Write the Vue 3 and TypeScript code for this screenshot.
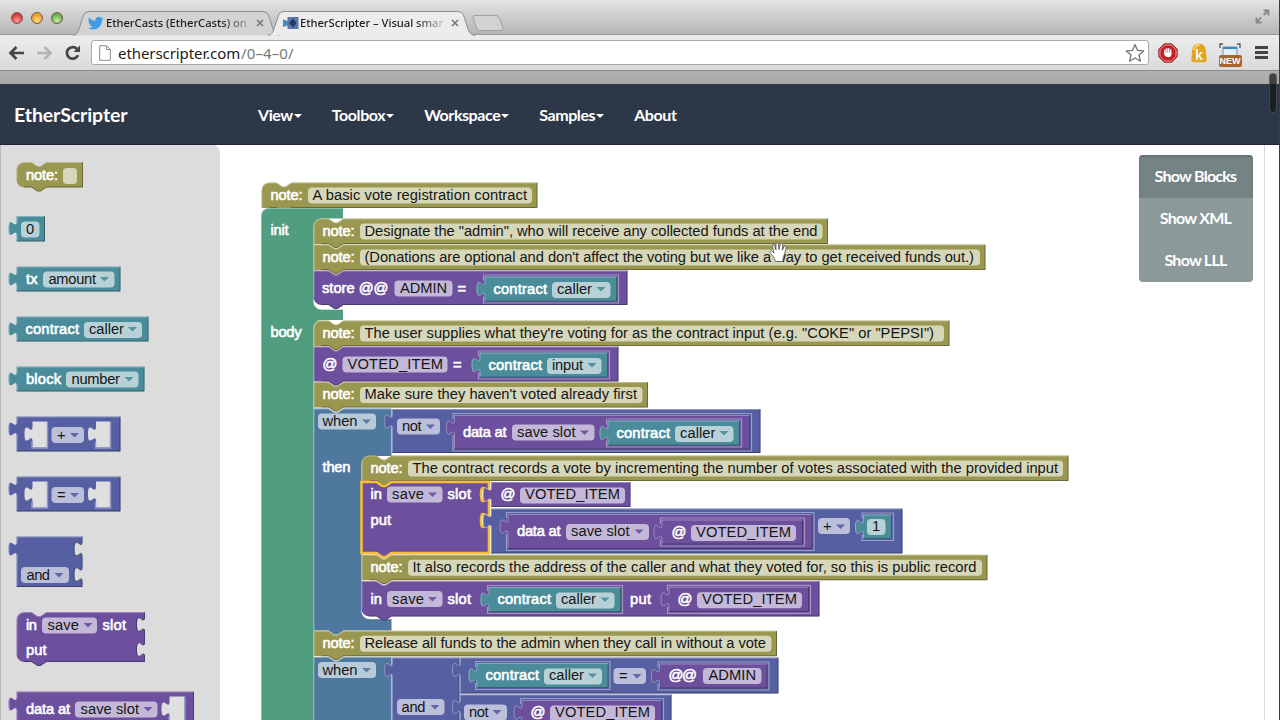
<script setup lang="ts">
type Shape =
  | { t: 'path'; d: string; fill: string; light: string; dark: string; sel?: boolean }
  | { t: 'rim'; d: string }
  | { t: 'hole'; d: string; rim: string }
  | { t: 'label'; s: string; x: number; w: number; y: number }
  | { t: 'field'; x: number; y: number; w: number; h: number }
  | { t: 'value'; s: string; x: number; w: number; y: number }
  | { t: 'arrow'; x: number; y: number; fill: string }

const C = {
  olive: '#9a9850',
  green: '#519d80',
  steel: '#4f789f',
  purple: '#6c4f9d',
  indigo: '#555fa2',
  teal: '#4b8c9b',
}
const LEFT_TAB = 'c0,-10 -8,8 -8,-7.5 s8,2.5 8,-7.5'
const RIGHT_TAB = 'c0,10 -8,-8 -8,7.5 s8,-2.5 8,7.5'

class Canvas {
  items: Shape[] = []

  raw(d: string, light: string, fill: string, dark = '', sel = false) {
    this.items.push({ t: 'path', d, fill, light, dark, sel })
    return this
  }

  // Statement block; `o.first` / `o.last` round the corners of a stack.
  stmt(x: number, y: number, r: number, b: number, fill: string,
       o: { first?: boolean; last?: boolean; tabs?: number[]; sel?: boolean } = {}) {
    const start = o.first ? `M${x},${y + 8} a8,8 0 0 1 8,-8` : `M${x},${y}`
    const top = `H${x + 15} l6,4 h3 l6,-4 H${r}`
    const tabs = (o.tabs ?? []).map((t) => `V${t} ${RIGHT_TAB}`).join(' ')
    const bottom = `V${b} H${x + 30} l-6,4 h-3 l-6,-4`
    const end = o.last ? `H${x + 8} a8,8 0 0 1 -8,-8 Z` : `H${x} Z`
    const left = o.last ? b - 8 : b
    return this.raw(
      `${start} ${top} ${tabs} ${bottom} ${end}`,
      `M${x + 0.5},${left} V${o.first ? y + 8 : y + 0.5} ${o.first ? 'a7.5,7.5 0 0 1 7.5,-7.5' : ''} H${x + 15} l6,4 h3 l6,-4 H${r}`,
      fill,
      `M${r - 0.5},${y} ${tabs} V${b - 0.5} H${x + 30} l-6,4 h-3 l-6,-4 H${x + 8}`,
      o.sel,
    )
  }

  // Value block with a plug on its left side.
  val(x: number, y: number, r: number, b: number, fill: string, inset = false, tabs: number[] = []) {
    const sockets = tabs.map((t) => `V${t} ${RIGHT_TAB}`).join(' ')
    if (inset) {
      this.items.push({ t: 'rim', d: `M${x - 1},${y + 20} V${b + 1.5} H${r + 1.5} V${y - 1.5} H${x - 1} V${y + 4}` })
    }
    return this.raw(
      `M${x},${y} H${r} ${sockets} V${b} H${x} V${y + 20} ${LEFT_TAB} Z`,
      `M${x + 0.5},${b} V${y + 20} ${LEFT_TAB} V${y + 0.5} H${r}`,
      fill,
      `M${r - 0.5},${y} ${sockets} V${b - 0.5} H${x}`,
    )
  }

  hole(x: number, y: number, r: number, b: number) {
    this.items.push({
      t: 'hole',
      d: `M${x},${y} H${r} V${b} H${x} V${y + 20} ${LEFT_TAB} Z`,
      rim: `M${r + 0.5},${y} V${b + 0.5} H${x - 0.5} V${y + 20}`,
    })
    return this
  }

  label(s: string, x: number, end: number, y: number) {
    this.items.push({ t: 'label', s, x, w: end - x, y })
    return this
  }

  field(x: number, r: number, y: number, s = '', tx = 0, te = 0, base = 0, arrow = 0, tone = '') {
    this.items.push({ t: 'field', x, y, w: r - x, h: 16 })
    if (s) this.items.push({ t: 'value', s, x: tx, w: te - tx, y: base })
    if (arrow) this.items.push({ t: 'arrow', x: arrow, y: base - 7, fill: tone })
    return this
  }

  note(x: number, y: number, r: number, s: string, te: number, first = false) {
    return this.stmt(x, y, r, y + 25.5, C.olive, { first })
      .label('note:', x + 9, x + 41, y + 17)
      .field(x + 46.5, r - 5.5, y + 5, s, x + 51, te, y + 17.4)
  }

  contract(x: number, y: number, r: number, s: string, te: number, inset = true) {
    return this.val(x, y, r, y + 25, C.teal, inset)
      .label('contract', x + 9, x + 62.5, y + 17.4)
      .field(x + 67.5, r - 6.5, y + 5.5, s, x + 72.5, te, y + 17.4, r - 16, C.teal)
  }

  voted(x: number, y: number, r: number, inset = true) {
    const f = r - (inset ? 112 : 110.5)
    return this.val(x, y, r, y + 25, C.purple, inset)
      .label('@', f - 19.5, f - 6, y + 17)
      .field(f, f + 105, y + 5.5, 'VOTED_ITEM', f + 5, f + 100, y + 17.4)
  }
}

const toolbox = new Canvas()
  .stmt(16.5, 162, 83, 187.5, C.olive, { first: true, last: true })
  .label('note:', 26, 58, 180)
  .field(63, 77, 168)
  .val(16.5, 216, 45, 241.5, C.teal)
  .field(21, 39.5, 221.5, '0', 26, 34, 234)
  .val(16.5, 266.5, 120.5, 291.5, C.teal)
  .label('tx', 26, 37.5, 284)
  .field(43, 114.5, 271.5, 'amount', 48.5, 96, 284, 104.5, C.teal)
  .contract(16.5, 316.5, 148.5, 'caller', 124, false)
  .val(16.5, 366.5, 144.5, 391.5, C.teal)
  .label('block', 26, 61, 384)
  .field(66, 138.5, 371.5, 'number', 71.5, 120, 384, 129, C.teal)
  .val(16.5, 416.5, 120.5, 451.5, C.indigo)
  .hole(32.5, 421.5, 47, 447.5)
  .field(51.5, 84, 427, '+', 57, 65, 440, 74.5, C.indigo)
  .hole(96, 421.5, 110, 447.5)
  .val(16.5, 476.5, 120.5, 511.5, C.indigo)
  .hole(32.5, 481.5, 47, 507.5)
  .field(51.5, 84, 487, '=', 57, 65, 500, 74.5, C.indigo)
  .hole(96, 481.5, 110, 507.5)
  .val(16.5, 536.5, 82.5, 587, C.indigo, false, [541.5, 567])
  .field(21, 69, 567, 'and', 26.5, 50, 580, 59, C.indigo)
  .stmt(16.5, 612, 145, 662, C.purple, { first: true, last: true, tabs: [617, 642] })
  .label('in', 26, 37, 630)
  .field(42, 97, 617.5, 'save', 47.5, 79, 630, 88, C.purple)
  .label('slot', 102.5, 126, 630)
  .label('put', 26, 46.5, 655)
  .val(16.5, 691.5, 194, 740, C.purple)
  .label('data at', 26, 70, 714)
  .field(75, 157.5, 701.5, 'save slot', 80.5, 139, 714, 148, C.purple)
  .hole(169.5, 696.5, 184.5, 724)
  .items

const program = new Canvas()
  .note(261.5, 182.5, 537.5, 'A basic vote registration contract', 527, true)
  .raw(
    'M261,216 a8,8 0 0 1 8,-8 H343 V218.5 H321.5 a8,8 0 0 0 -8,8 V301.5 a8,8 0 0 0 8,8 H343 V320 H321.5 a8,8 0 0 0 -8,8 V730 H261 Z',
    'M261.5,730 V216 a7.5,7.5 0 0 1 7.5,-7.5 H343 M313.5,301.5 a8,8 0 0 0 8,8 H343',
    C.green,
  )
  .label('init', 270.5, 288.5, 235)
  .label('body', 270.5, 301.5, 337)
  .note(313.5, 218.5, 828, 'Designate the "admin", who will receive any collected funds at the end', 817.5, true)
  .note(313.5, 244.5, 985.5, "(Donations are optional and don't affect the voting but we like a way to get received funds out.)", 974)
  .stmt(313.5, 270.5, 627.5, 305, C.purple, { last: true })
  .label('store @@', 322, 388.5, 293)
  .field(394.5, 452.5, 280.5, 'ADMIN', 400, 447, 293)
  .label('=', 457.5, 466.5, 294)
  .contract(484.5, 276.5, 617, 'caller', 592)
  .note(313.5, 320.5, 949.5, 'The user supplies what they\'re voting for as the contract input (e.g. "COKE" or "PEPSI")', 934, true)
  .stmt(313.5, 346.5, 618.5, 381.5, C.purple)
  .label('@', 322.5, 336, 369)
  .field(342.5, 447.5, 356.5, 'VOTED_ITEM', 347.5, 443, 369)
  .label('=', 453, 461.5, 370)
  .contract(479.5, 352.5, 608, 'input', 583)
  .note(313.5, 382, 648, "Make sure they haven't voted already first", 637)
  .raw(
    'M313.5,408.5 h15 l6,4 h3 l6,-4 H391.5 V456 H369.5 a8,8 0 0 0 -8,8 V611 a8,8 0 0 0 8,8 H391.5 V630.5 H343.5 l-6,4 h-3 l-6,-4 H313.5 Z',
    'M314,630 V409 H328.5 l6,4 h3 l6,-4 H391.5 M361.5,611 a8,8 0 0 0 8,8 H391',
    C.steel,
  )
  .field(318, 376, 413.5, 'when', 322.5, 357.5, 426.4, 366.5, C.steel)
  .label('then', 322.5, 350.5, 472.4)
  .val(392, 409, 760.5, 453, C.indigo)
  .field(397, 440, 418.5, 'not', 402, 421.5, 431.4, 430.5, C.indigo)
  .val(454, 415, 750, 449.5, C.purple, true)
  .label('data at', 463, 506.5, 437.4)
  .field(512, 594.5, 424.5, 'save slot', 517, 575.5, 437.4, 584.5, C.purple)
  .contract(607.5, 420.5, 740, 'caller', 715.5)
  .note(361.5, 455.5, 1068.5, 'The contract records a vote by incrementing the number of votes associated with the provided input', 1058, true)
  .stmt(361.5, 482, 489, 553, C.purple, { tabs: [487, 513], sel: true })
  .label('in', 370.5, 382, 499.4)
  .field(387, 442.5, 486.5, 'save', 392, 424, 499.4, 432.5, C.purple)
  .label('slot', 447.5, 471, 499.4)
  .label('put', 370.5, 391, 525.4)
  .voted(491, 482, 630.5, false)
  .val(491, 508.5, 902.5, 553.5, C.indigo)
  .val(507.5, 514, 812.5, 549, C.purple, true)
  .label('data at', 517, 560.5, 536.4)
  .field(566, 649, 524, 'save slot', 571, 629.5, 536.4, 639, C.purple)
  .voted(661.5, 519.5, 803)
  .field(818, 850, 518, '+', 823, 831.5, 531.4, 840.5, C.indigo)
  .val(863, 514.5, 892, 539, C.teal, true)
  .field(867, 885.5, 519, '1', 872, 880, 531.4)
  .note(361.5, 554.7, 987.5, 'It also records the address of the caller and what they voted for, so this is public record', 976.5)
  .stmt(361.5, 581, 819.5, 616.5, C.purple, { last: true })
  .label('in', 370.5, 382, 604)
  .field(387, 442.5, 591, 'save', 392, 424, 604, 432.5, C.purple)
  .label('slot', 447.5, 471, 604)
  .contract(488.5, 587, 621, 'caller', 596)
  .label('put', 630, 651, 604)
  .voted(668.5, 586.8, 809)
  .note(313.5, 630.8, 777, 'Release all funds to the admin when they call in without a vote', 766)
  .raw(
    'M313.5,657 h15 l6,4 h3 l6,-4 H391.5 V730 H313.5 Z',
    'M314,730 V657.5 H328.5 l6,4 h3 l6,-4 H391.5',
    C.steel,
  )
  .field(318, 376, 662, 'when', 322.5, 357.5, 675, 366.5, C.steel)
  .val(392, 657.5, 459.5, 740, C.indigo)
  .field(397, 444.5, 699, 'and', 401.5, 425.5, 712, 435, C.indigo)
  .val(460, 657.5, 778.5, 693.5, C.indigo)
  .contract(476.5, 663, 608.5, 'caller', 584)
  .field(613.5, 646, 668, '=', 619, 627.5, 681, 637, C.indigo)
  .val(659, 663.5, 767.5, 688.5, C.purple, true)
  .label('@@', 668.5, 697, 680)
  .field(703, 761.5, 668, 'ADMIN', 708.5, 756, 680.4)
  .val(460, 694.5, 671.5, 740, C.indigo)
  .field(464, 507, 704.5, 'not', 469, 488.5, 717, 497, C.indigo)
  .voted(521.5, 700, 662)
  .items

const layers = [
  { name: 'toolbox', tag: 'aside', box: '0 145 220 575', w: 220, items: toolbox },
  { name: 'program', tag: 'main', box: '220 145 1044 575', w: 1044, items: program },
]
const tabs = [
  { title: 'EtherCasts (EtherCasts) on', icon: 'bird', active: false },
  { title: 'EtherScripter – Visual smar', icon: 'puzzle', active: true },
]
const menus = [
  { name: 'View', caret: true },
  { name: 'Toolbox', caret: true },
  { name: 'Workspace', caret: true },
  { name: 'Samples', caret: true },
  { name: 'About', caret: false },
]
const views = ['Show Blocks', 'Show XML', 'Show LLL']
</script>

<template>
  <div class="window">
    <header class="tabstrip">
      <div class="lights"><i class="red"></i><i class="amber"></i><i class="lime"></i></div>
      <div v-for="t in tabs" :key="t.title" class="tab" :class="{ active: t.active }">
        <svg class="tabshape" width="208" height="26" viewBox="0 0 208 26">
          <path d="M0,25.5 C4,24.5 5,22 6,19 L10.5,5 Q12,1.5 16,1.5 H190 Q194,1.5 195.500,5 L200,19 C201.500,23 203,25 207,25.500" />
        </svg>
        <svg v-if="t.icon === 'bird'" class="fav" width="16" height="14" viewBox="0 0 16 14">
          <path fill="#3f9be6" d="M15.500 2.400c-.6.300-1.200.5-1.900.5.700-.4 1.100-1 1.400-1.800-.6.400-1.300.7-2 .8A3.200 3.200 0 0 0 7.500 4.800C4.900 4.700 2.500 3.400.9 1.400c-.9 1.500-.4 3.300 1 4.300-.5 0-1-.2-1.400-.4 0 1.600 1.100 2.900 2.500 3.200-.5.100-1 .1-1.400 0 .4 1.300 1.600 2.200 3 2.200C3.200 11.800 1.600 12.300 0 12.100c5 3.200 13.900 1 13.900-7.800.6-.5 1.200-1.100 1.600-1.900z" />
        </svg>
        <svg v-else class="fav" width="16" height="14" viewBox="0 0 16 14">
          <path fill="#5a76ab" d="M4.500 1H15.500V13H4.500V9.500L0 11V3.500L4.500 5Z" /><path fill="#25385f" d="M10 2.500 13.500 7 10 11.500 6 7Z" /><path fill="#3e93c4" d="M0 4 3.500 5.500V9L0 10.500Z" />
        </svg>
        <span class="title">{{ t.title }}</span>
        <svg class="close" width="8" height="8" viewBox="0 0 8 8"><path d="M1 1 7 7M7 1 1 7" stroke="#777" stroke-width="1.600" /></svg>
      </div>
      <svg class="newtab" width="34" height="18" viewBox="0 0 34 18">
        <path d="M3.500 1.500H25Q27.500 1.500 28.500 4L32 14Q32.500 16.500 30 16.500H9Q6.500 16.500 5.500 14L2 4Q1.500 1.500 3.500 1.500Z" fill="#d2d2d2" stroke="#a0a0a0" />
      </svg>
      <svg class="expand" width="15" height="15" viewBox="0 0 15 15">
        <path d="M8.500 1.500H13.500V6.500M13.500 1.500 8.500 6M1.500 8.500V13.500H6.500M1.500 13.500 6 8.500" fill="none" stroke="#858585" stroke-width="1.800" />
      </svg>
    </header>

    <div class="toolbar">
      <svg width="82" height="20" viewBox="0 0 82 20" class="navicons">
        <path d="M16 10H2.500M8.500 4 2.500 10 8.500 16" fill="none" stroke="#444" stroke-width="2.700" />
        <path d="M29 10H42.500M36.500 4 42.500 10 36.500 16" fill="none" stroke="#b5b5b5" stroke-width="2.700" />
        <path d="M69 6A5.800 5.800 0 1 0 70 12.200" fill="none" stroke="#444" stroke-width="2.700" /><path d="M72 2.500V9H65.500Z" fill="#444" />
      </svg>
      <div class="omnibox">
        <svg width="12" height="16" viewBox="0 0 12 16"><path d="M.7.7H7.500L11.300 4.500V15.300H.7ZM7.500.7V4.500H11.300" fill="#fff" stroke="#8a8a8a" /></svg>
        <span class="url">etherscripter.com<em>/0–4–0/</em></span>
        <svg class="star" width="20" height="20" viewBox="0 0 20 20"><path d="M10 1.500 12.500 7.300 18.700 7.900 14 12 15.400 18.200 10 15 4.600 18.200 6 12 1.300 7.900 7.500 7.300Z" fill="#fff" stroke="#777" stroke-width="1.300" stroke-linejoin="round" /></svg>
      </div>
      <div class="exts">
        <svg width="20" height="20" viewBox="0 0 20 20">
          <path d="M6.200.8H13.800L19.200 6.200V13.800L13.800 19.200H6.200L.8 13.800V6.200Z" fill="#c71f26" stroke="#8e3a3d" /><path d="M6.700 2H13.300L18 6.700V13.300L13.300 18H6.700L2 13.300V6.700Z" fill="none" stroke="#eba7a7" stroke-width=".9" />
          <path d="M7 10.500V7M8.900 9.500V5.700M10.800 9.500V5.700M12.700 10.500V7" stroke="#fff" stroke-width="1.400" stroke-linecap="round" /><path d="M6.300 9.500H13.400V12Q12.800 14.300 10.500 14.300 7.800 14.300 6.300 12Z" fill="#fff" />
        </svg>
        <svg width="18" height="20" viewBox="0 0 18 20"><path d="M2 9C2 3 5 .7 9 .7S16 3 16 9L16.700 17Q16.700 19.300 14.500 19.300H3.500Q1.300 19.300 1.300 17Z" fill="#e5a41f" /><path d="M4 7Q5 2 9.500 2" stroke="#f7cf6c" stroke-width="2" fill="none" /><text x="5" y="17" class="kay">k</text></svg>
        <div class="newicon"><svg width="22" height="14" viewBox="0 0 22 14"><path d="M1 5V1H4M18 1H21V5" fill="none" stroke="#555" stroke-width="1.300" /><path d="M4 4H18V14H4Z" fill="#e4f0f8" stroke="#6796b7" /><path d="M4 5H18" stroke="#3e87bb" stroke-width="2" /></svg><b>NEW</b></div>
        <div class="burger"><i></i><i></i><i></i></div>
      </div>
    </div>
    <div class="shade"></div>

    <nav class="navbar">
      <div class="brand">EtherScripter</div>
      <div v-for="m in menus" :key="m.name" class="menu">{{ m.name }}<i v-if="m.caret"></i></div>
    </nav>

    <div class="page">
      <component :is="layer.tag" v-for="layer in layers" :key="layer.name" :class="layer.name">
        <svg class="blocks" :width="layer.w" height="575" :viewBox="layer.box">
          <template v-for="(s, i) in layer.items" :key="i">
            <g v-if="s.t === 'path'">
              <path :d="s.d" :fill="s.fill" />
              <path v-if="!s.sel" :d="s.light" class="lit" />
              <path v-if="s.dark && !s.sel" :d="s.dark" class="dim" />
              <path v-if="s.sel" :d="s.d" class="chosen" />
            </g>
            <path v-else-if="s.t === 'rim'" :d="s.d" class="rim" />
            <g v-else-if="s.t === 'hole'">
              <path :d="s.d" fill="#dfdfdf" /><path :d="s.rim" class="holerim" />
            </g>
            <text v-else-if="s.t === 'label'" class="label" :x="s.x" :y="s.y" :textLength="s.w">{{ s.s }}</text>
            <rect v-else-if="s.t === 'field'" class="field" :x="s.x" :y="s.y" :width="s.w" :height="s.h" rx="4" />
            <text v-else-if="s.t === 'value'" class="value" :x="s.x" :y="s.y" :textLength="s.w">{{ s.s }}</text>
            <path v-else-if="s.t === 'arrow'" class="arrow" :d="`M${s.x - 4.5},${s.y} h9 l-4.500,4.500 z`" :fill="s.fill" />
          </template>
        </svg>
      </component>
      <div class="views"><div v-for="(v, i) in views" :key="v" :class="{ on: i === 0 }">{{ v }}</div></div>
      <svg class="hand" width="20" height="22" viewBox="0 0 20 22">
        <path d="M6.500 20.500 5 16.500 1 11.500Q.7 9.500 2.500 9.800L5 12 3.500 5Q3.500 3.200 5.200 3.500L7 9 7 2.500Q8 .8 9.300 2.500L10 8.500 11.500 2.500Q13 1.200 13.700 3L13.300 9.200 15.500 5Q17.200 4.300 17.300 6L15.500 13 14 17V20.500Z" fill="#fff" stroke="#444" stroke-width=".7" stroke-linejoin="round" />
      </svg>
    </div>
    <div class="thumb"></div>
  </div>
</template>

<style>
body { margin: 0; overflow: hidden; background: #fff; }
</style>

<style scoped>
.window { position: relative; width: 1280px; height: 720px; overflow: hidden; display: flex; flex-direction: column; background: #fff; font-family: Lato, sans-serif; }
.window::after { content: ''; position: absolute; right: 0; top: 0; width: 1px; height: 720px; background: #3b3b3b; }
.tabstrip { height: 35px; flex: none; display: flex; background: linear-gradient(#e4e4e4, #b5b5b5); border-bottom: 1px solid #999; box-sizing: border-box; }
.lights { display: flex; gap: 8px; padding: 12px 0 0 11px; width: 62px; flex: none; }
.lights i { width: 12px; height: 12px; border-radius: 50%; box-sizing: border-box; border: 1px solid #7b5a52; }
.red { background: radial-gradient(circle at 50% 75%, #ff9b95, #d9373c 65%); }
.amber { background: radial-gradient(circle at 50% 75%, #ffe08a, #e79d29 65%); }
.lime { background: radial-gradient(circle at 50% 75%, #c9f0a0, #67ae4b 65%); }
.tab { position: relative; width: 195px; height: 26px; margin-top: 10px; flex: none; display: flex; align-items: center; }
.tab.active { z-index: 2; }
.tabshape { position: absolute; left: 0; top: 0; fill: #d3d3d3; stroke: #8d8d8d; }
.active .tabshape { fill: #ececec; }
.fav { position: relative; margin-left: 15px; flex: none; }
.title { position: relative; margin: 0 0 0 2px; width: 144px; flex: none; white-space: nowrap; font: 500 11.200px/18px "Noto Sans", sans-serif; letter-spacing: -.02px; color: #1c1c1c; -webkit-mask-image: linear-gradient(90deg, #000 115px, rgba(0, 0, 0, .25) 141px); mask-image: linear-gradient(90deg, #000 115px, rgba(0, 0, 0, .25) 141px); }
.active .title { margin-left: 1px; width: 145px; }
.close { position: relative; margin-left: 6px; flex: none; }
.newtab { margin: 14px 0 0 8px; flex: none; }
.expand { margin: 9px 10px 0 auto; }
.toolbar { height: 35px; flex: none; display: flex; align-items: center; background: linear-gradient(#ededed, #dadada); border-bottom: 1px solid #8a8a8a; }
.navicons { margin-left: 8px; flex: none; }
.omnibox { margin-left: 1px; height: 25px; flex: none; display: flex; align-items: center; background: #fff; border: 1px solid #aaa; border-radius: 3px; padding: 0 3px 0 7px; box-sizing: border-box; width: 1058px; }
.url { margin-left: 7px; font: 15px/24px "Noto Sans", sans-serif; letter-spacing: -.08px; color: #1c1c1c; }
.url em { font-style: normal; color: #777; margin-left: 1px; letter-spacing: .1px; }
.star { margin-left: auto; }
.exts { display: flex; align-items: center; flex: 1; padding-left: 9px; }
.exts > svg + svg { margin-left: 12px; }
.kay { font: 600 14px "Open Sans", sans-serif; fill: #fff; }
.newicon { margin-left: 10px; width: 24px; height: 25px; display: flex; flex-direction: column; align-items: center; padding-top: 5px; }
.newicon b { margin-top: -2px; width: 23px; height: 12px; border-radius: 2px; background: #a8642a; color: #fff; font: bold 9px/12px "Liberation Sans", sans-serif; text-align: center; z-index: 1; }
.burger { margin-left: 13px; display: flex; flex-direction: column; gap: 2px; }
.burger i { width: 13px; height: 3px; background: #444; }
.shade { height: 13px; flex: none; background: linear-gradient(#b1b1b1, #a7a7a7); }
.navbar { height: 61px; flex: none; display: flex; align-items: center; background: #2c3748; color: #fff; border-bottom: 1px solid #1f2839; box-sizing: border-box; font-weight: 700; font-size: 16px; padding-top: 1px; }
.brand { width: 244px; margin-left: 14px; font-size: 19.500px; letter-spacing: -.1px; flex: none; }
.menu { display: flex; align-items: center; margin-right: 30px; letter-spacing: -.42px; }
.menu i { border: 4px solid transparent; border-top-color: #fff; border-bottom: 0; margin: 2px 0 0 1px; }
.page { position: relative; flex: 1; display: flex; }
.toolbox { width: 220px; background: #dcdcdc; border-top-right-radius: 8px; box-shadow: inset 1px 0 #bbb; }
.program { width: 1044px; border-right: 1px solid #d5d9dc; }
.blocks { display: block; }
.lit { fill: none; stroke: #fff; stroke-opacity: .32; }
.dim { fill: none; stroke: #000; stroke-opacity: .3; }
.rim { fill: none; stroke: #fff; stroke-opacity: .38; stroke-width: 1.200; }
.holerim { fill: none; stroke: #9499c8; stroke-width: 1.500; }
.chosen { fill: none; stroke: #f6bd3a; stroke-width: 2.600; }
.field { fill: #fff; fill-opacity: .6; }
.arrow { fill-opacity: .9; }
.label, .value { font-family: "Liberation Sans", sans-serif; font-size: 14.700px; }
.label { fill: #fff; stroke: #fff; stroke-width: .6; }
.value { fill: #151515; }
.views { position: absolute; left: 1139px; top: 10px; width: 114px; border-radius: 4px; overflow: hidden; background: #8c999a; color: #fff; font-weight: 700; font-size: 16px; letter-spacing: -.75px; text-align: center; }
.views div { height: 42px; line-height: 40px; padding-right: 1px; }
.views .on { height: 43px; line-height: 41px; background: #748384; box-shadow: inset 0 2px 3px rgba(0, 0, 0, .15); }
.hand { position: absolute; left: 769px; top: 96px; }
.thumb { position: absolute; right: 3px; top: 73px; width: 6px; height: 38px; border-radius: 4px; background: rgba(20, 20, 20, .7); border: 1px solid rgba(130, 130, 130, .4); box-sizing: content-box; }
</style>
